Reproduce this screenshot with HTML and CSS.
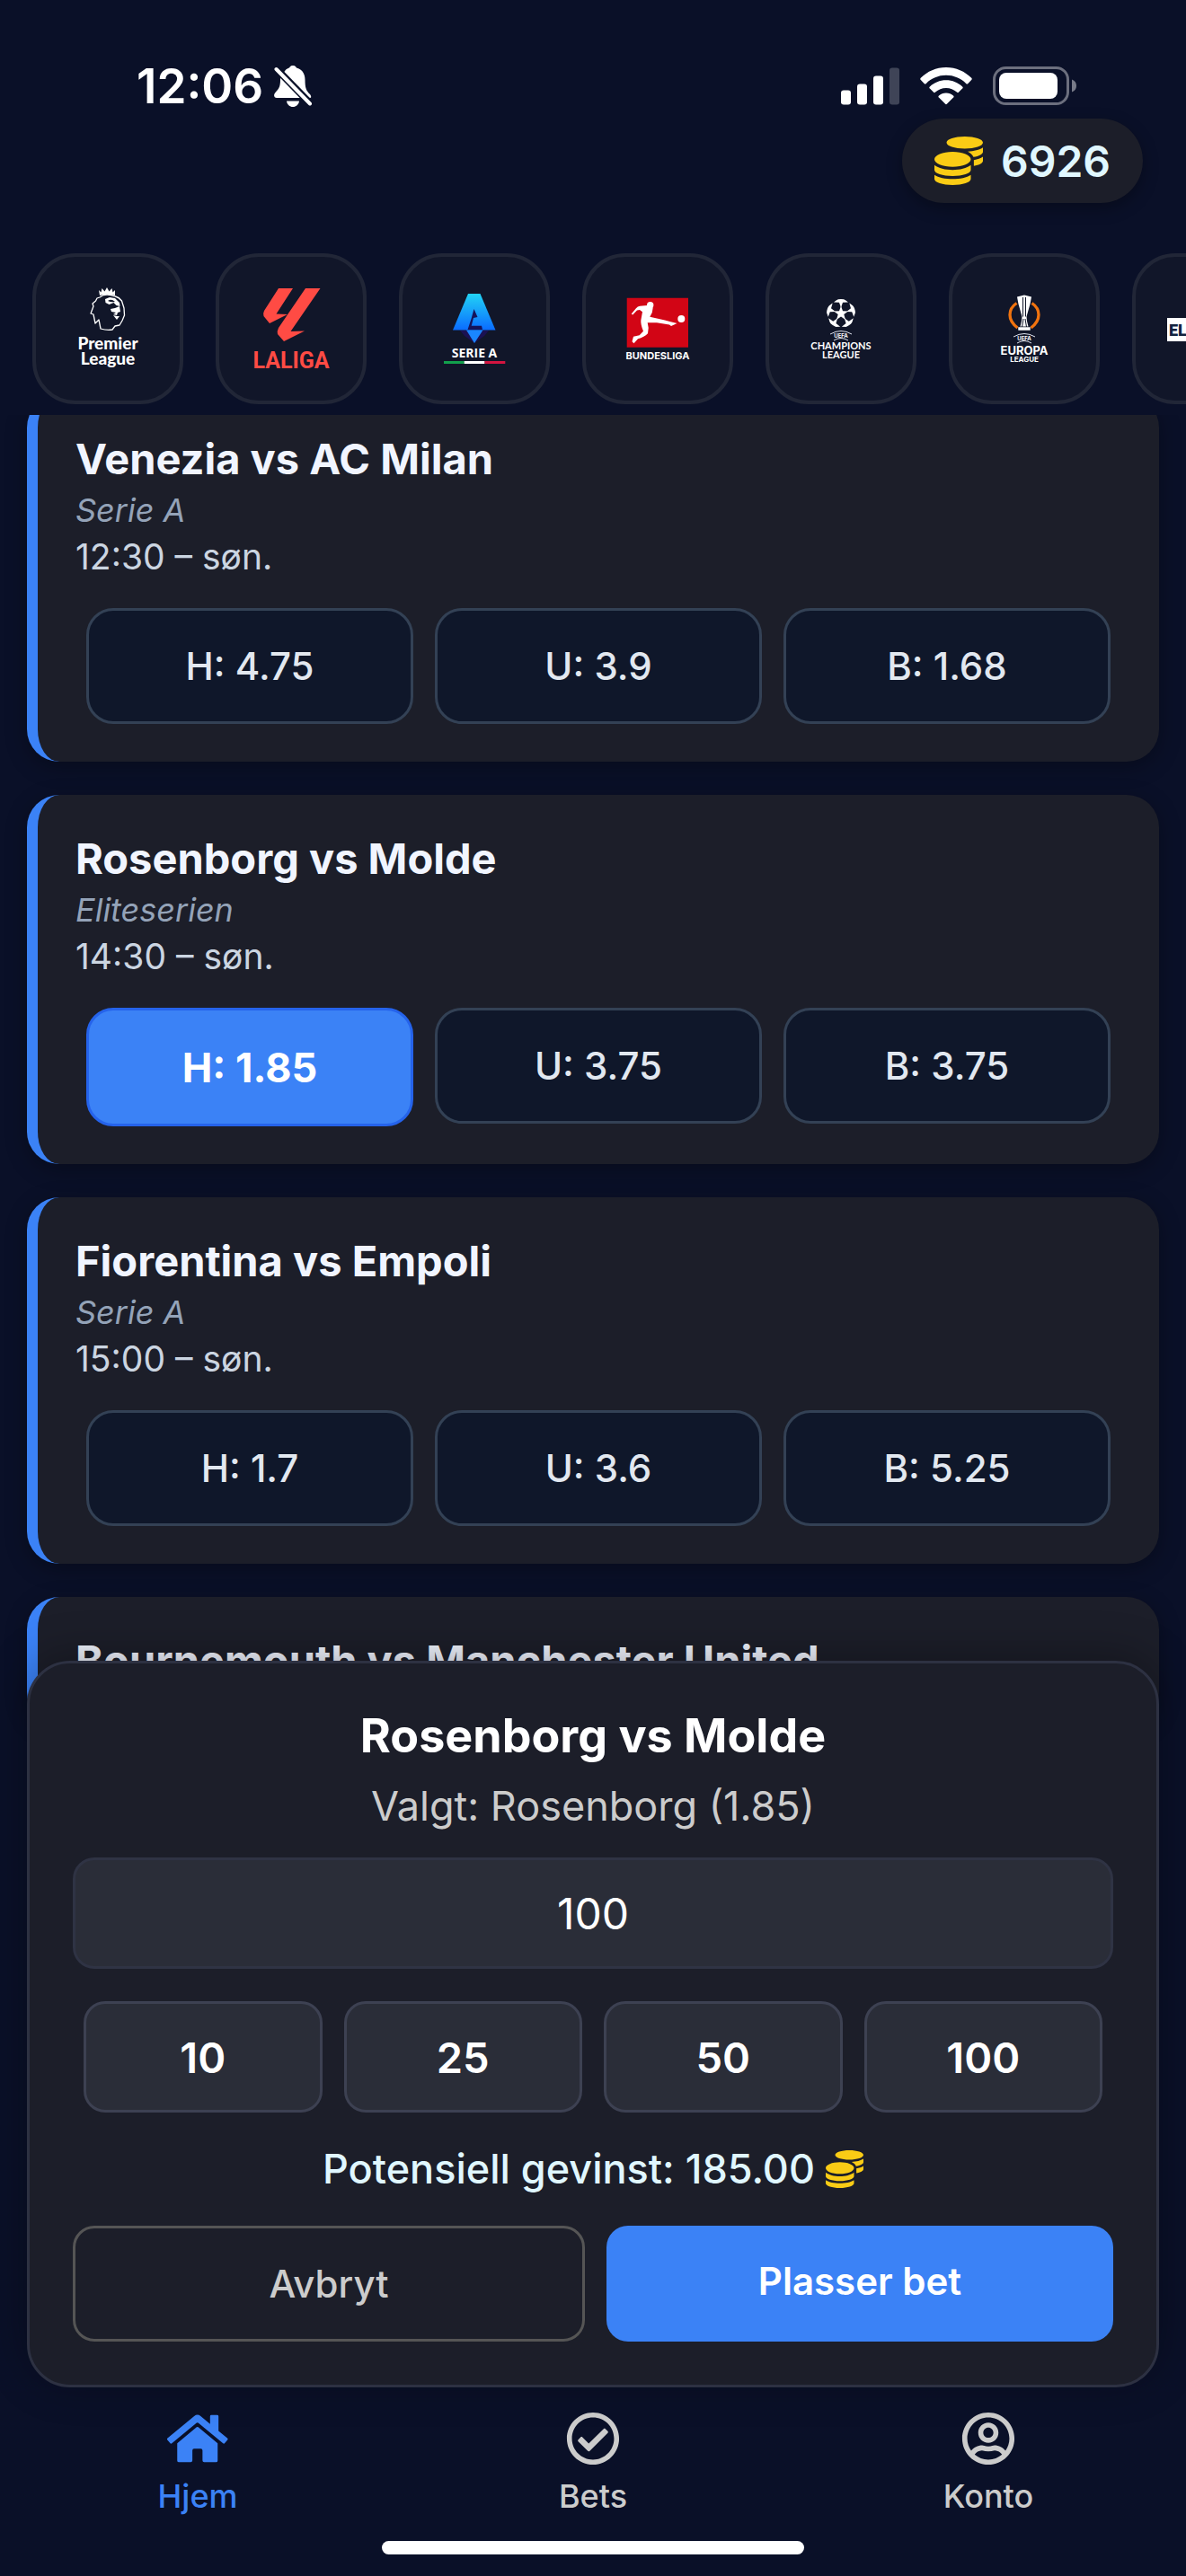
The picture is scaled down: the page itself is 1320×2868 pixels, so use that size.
FILE: index.html
```html
<!DOCTYPE html>
<html lang="no">

<head>
   <meta charset="UTF-8">
   <meta name="viewport" content="width=device-width, initial-scale=1.0">
   <title>Hjem</title>
   <link rel="stylesheet" href="styles.css">
</head>

<body>
   <!-- shared shapes -->
   <svg class="defs" aria-hidden="true">
      <symbol id="coins" viewBox="0 0 512 512">
         <path d="M0 405.3V448c0 35.3 86 64 192 64s192-28.7 192-64v-42.7C342.7 434.4 267.2 448 192 448S41.3 434.4 0 405.3zM320 128c106 0 192-28.7 192-64S426 0 320 0 128 28.7 128 64s86 64 192 64zM0 300.4V352c0 35.3 86 64 192 64s192-28.7 192-64v-51.6c-41.3 34-116.9 51.6-192 51.6S41.3 334.4 0 300.4zm416 11c57.3-11.1 96-31.7 96-55.4v-42.7c-23.2 16.4-57.3 27.6-96 34.5v63.6zM192 160C86 160 0 195.8 0 240s86 80 192 80 192-35.8 192-80-86-80-192-80zm219.3 56.3c60-10.8 100.7-32 100.7-56.3v-42.7c-35.5 25.1-96.5 38.6-160.7 41.8 29.5 14.3 51.2 33.5 60 57.2z" />
      </symbol>
   </svg>

   <div class="status-bar">
      <div class="status-left">
         <span class="clock">12:06</span>
         <svg width="42" height="46" viewBox="0 0 42 46" aria-hidden="true">
            <path fill="#fff" d="M12 6C14 3.500 16 3 17 2.600C18 .5 19.500 0 21 0s3 .5 4 2.600C31 4 34.500 9 34.500 16c0 9 1.500 12 5 15.500 1.500 1.500 2 3 1.500 4.200L39 36H3c-3 0-4-3-1.500-6C5 26 7 24 7 16c0-1 0-2 .3-3zM14 39.500h14c-.5 4-3.500 6.500-7 6.500s-6.500-2.500-7-6.500z" />
            <path stroke="#0a1028" stroke-width="8" d="M3 4l37 38" />
            <path stroke="#fff" stroke-width="4" stroke-linecap="round" d="M2.500 4l37.500 38.500" />
         </svg>
      </div>
      <div class="status-right">
         <svg width="65" height="42" viewBox="0 0 65 42" fill="#fff" aria-hidden="true">
            <rect x="0" y="25.500" width="11" height="16" rx="3" />
            <rect x="18" y="18.500" width="11" height="23" rx="3" />
            <rect x="36" y="9.500" width="11" height="32" rx="3" />
            <rect x="54" y="0.500" width="11" height="41" rx="3" opacity=".22" />
         </svg>
         <svg width="58" height="42" viewBox="0 0 58 42" aria-hidden="true">
            <path fill="#fff" d="M29 0C40 0 50 4.500 57.200 11.800c.7.800.7 1.500 0 2.200l-3.800 3.900c-.7.700-1.500.7-2.200 0C45.500 12.200 37.500 8.800 29 8.800S12.500 12.200 6.800 17.900c-.7.700-1.500.7-2.200 0L.8 14c-.7-.7-.7-1.400 0-2.200C8 4.500 18 0 29 0zM29 14.200c7 0 13.300 2.700 18.100 7.200.8.800.8 1.500 0 2.200l-4 4c-.7.700-1.400.7-2.200 0-3.200-2.900-7.300-4.600-11.900-4.600s-8.700 1.700-11.900 4.600c-.8.700-1.500.7-2.200 0l-4-4c-.8-.7-.8-1.400 0-2.200 4.800-4.500 11.100-7.200 18.100-7.200zM29 28.500c3.100 0 5.900 1.100 8 2.900.8.800.8 1.500.1 2.200l-7 7c-.8.800-1.400.8-2.200 0l-7-7c-.7-.7-.7-1.400.1-2.200 2.100-1.800 4.900-2.900 8-2.900z" />
         </svg>
         <svg width="93" height="44" viewBox="0 0 93 44" aria-hidden="true">
            <rect x="1.500" y="1.500" width="82" height="40" rx="13" fill="none" stroke="#fff" stroke-opacity=".4" stroke-width="3" />
            <rect x="7" y="7" width="65" height="29" rx="8" fill="#fff" />
            <path fill="#fff" fill-opacity=".45" d="M88 14.500c3.500 1.200 5 4 5 7s-1.500 5.800-5 7z" />
         </svg>
      </div>
   </div>

   <header class="header">
      <div class="balance">
         <svg class="coins" aria-hidden="true"><use href="#coins" /></svg>
         <span>6926</span>
      </div>
   </header>

   <div class="leagues">
      <button type="button" class="league" aria-label="Premier League">
         <svg viewBox="36 36 96 96" aria-hidden="true">
            <path fill="#fff" d="M74 41l2.500 2.500L77.500 39l3 3.500L83 38l2.500 4.500 3-3.500 1 4.500L92 41v6q-9-2.500-17 0z" />
            <path fill="none" stroke="#fff" stroke-width="1.300" stroke-linejoin="round" d="M92 48q-7-3-13-1.500l-4 2.500-3 1-1.500 3L67 56l1 3-3 8 3 1 2 10 4-4 2 10q7 2 13 1l3-4 5-1 3-5 2.500-6-.5-8-2.500-8q-3-4-7-5z" />
            <path fill="#fff" d="M81 51l5-2 6 1 5 5 .5 4-4-1-3-3-5 2-4-2zM87 62l5-1 5-2 1 6-3 1-1 3-4-1 3-2-5-1zM90 69l4 1 3 0-3 4z" />
            <path fill="#111629" d="M84 53q4-3 8 1-4 1-8-1z" />
            <text class="logo-round" x="84" y="107" fill="#fff">Premier</text>
            <text class="logo-round" x="84" y="124" fill="#fff">League</text>
         </svg>
      </button>
      <button type="button" class="league" aria-label="LaLiga">
         <svg viewBox="36 36 96 96" aria-hidden="true">
            <path fill="#ff4b44" d="M70 39h16L67.500 67.500 80 68 60 78l-6.500-8q-1-3 .5-6zM100 39h16.500L83.500 87l15.500-.5L76 98l-7-8q-1-3 1-7z" />
            <text class="logo-laliga" x="84" y="128" fill="#ff4b44">LALIGA</text>
         </svg>
      </button>
      <button type="button" class="league" aria-label="Serie A">
         <svg viewBox="36 36 96 96" aria-hidden="true">
            <defs>
               <linearGradient id="serieA" x1="0" y1="0" x2="0" y2="1">
                  <stop offset="0" stop-color="#22d3f5" />
                  <stop offset="1" stop-color="#0a6cff" />
               </linearGradient>
            </defs>
            <path fill="#1b1152" d="M68 86h32l-5 6-11 8-11-8z" />
            <path fill="url(#serieA)" d="M77 45h13.500l17 40.500H60z" />
            <path fill="#15135a" d="M83.500 62l4 9-4.500 1-2.300 8.700H92l1 4.300H76.500l4-12z" />
            <path fill="#1a86ff" d="M75 85.500h18.500L84 100z" />
            <text class="logo-serie" x="84" y="116" fill="#fff">SERIE A</text>
            <path stroke="#12a04c" stroke-width="3" d="M50 121.500h22.700" />
            <path stroke="#fff" stroke-width="3" d="M72.700 121.500h22.800" />
            <path stroke="#d31440" stroke-width="3" d="M95.500 121.500h22.800" />
         </svg>
      </button>
      <button type="button" class="league" aria-label="Bundesliga">
         <svg viewBox="36 36 96 96" aria-hidden="true">
            <path fill="#d20515" d="M49.700 49.700h68.300v55H49.700z" />
            <circle cx="75.700" cy="57.700" r="3.700" fill="#fff" />
            <path fill="#fff" d="M54.700 67.500l5-6q2-2.800 4.500-2.800l8.500-.7 6 2.500q0 5-3.400 10.200L92 74.500l5.500 1.500 8 2-6.500 3-2-1.500-14-2.200H72.700q2 6 .3 12-4 4-11 6l-4.500 5-2-2 1.500-5.500 6.700-1.500 4.300-4.500q-3-7-2.700-12l1.700-9.500-3-2.300-3 .5-4.800 5z" />
            <circle cx="110.300" cy="73" r="4" fill="#fff" />
            <text class="logo-bundes" x="84" y="118" fill="#fff">BUNDESLIGA</text>
         </svg>
      </button>
      <button type="button" class="league" aria-label="Champions League">
         <svg viewBox="36 36 96 96" aria-hidden="true">
            <defs>
               <path id="star" d="M0-8.500l2 5.700 6 .2-4.700 3.700L5 7 0 3.600-5 7l1.700-5.900L-8-2.600l6-.2z" />
               <clipPath id="ball">
                  <circle cx="0" cy="0" r="16" />
               </clipPath>
            </defs>
            <g transform="translate(84 67)" fill="#fff">
               <use href="#star" />
               <g clip-path="url(#ball)">
                  <use href="#star" transform="translate(0 -15) rotate(180)" />
                  <use href="#star" transform="rotate(72) translate(0 -15) rotate(180)" />
                  <use href="#star" transform="rotate(144) translate(0 -15) rotate(180)" />
                  <use href="#star" transform="rotate(216) translate(0 -15) rotate(180)" />
                  <use href="#star" transform="rotate(288) translate(0 -15) rotate(180)" />
               </g>
            </g>
            <path fill="none" stroke="#dfe3ee" stroke-width="1" d="M72 90q12-7 24 0M76 97q8-5 16 0" />
            <text class="logo-uefa" x="84" y="94" fill="#fff">UEFA</text>
            <text class="logo-ucl" x="84" y="107" fill="#fff">CHAMPIONS</text>
            <text class="logo-ucl" x="84" y="117" fill="#fff">LEAGUE</text>
         </svg>
      </button>
      <button type="button" class="league" aria-label="Europa League">
         <svg viewBox="36 36 96 96" aria-hidden="true">
            <path fill="none" stroke="#f0730f" stroke-width="3.300" d="M75.500 55.500q-7.500 5-7.500 13t8.500 14.500M92.500 55.500q7.500 5 7.500 13T91.500 83" />
            <path fill="#fff" d="M76 48.500l4-1 4-1 4 1 4 1-1.500 8-4 14 .5 5 1.500 6h-9l1.500-6 .5-5-4-14zM77.300 82.300h13.400v3.500H77.300z" />
            <path stroke="#111629" stroke-width="1" d="M82.500 49v21.500M85.500 49v21.500M83 73l-1.500 9M85 73l1.500 9" />
            <path fill="none" stroke="#dfe3ee" stroke-width="1" d="M72 93q12-7 24 0M76 100q8-5 16 0" />
            <text class="logo-uefa" x="84" y="97" fill="#fff">UEFA</text>
            <text class="logo-uel" x="84" y="113" fill="#fff">EUROPA</text>
            <text class="logo-uel-sub" x="84" y="121" fill="#fff">LEAGUE</text>
         </svg>
      </button>
      <button type="button" class="league" aria-label="Eliteserien">
         <svg viewBox="36 36 96 96" aria-hidden="true">
            <path fill="#fff" d="M39 72h90v26H39z" />
            <text class="logo-elite" x="41" y="92" fill="#12233f">ELITESERIEN</text>
         </svg>
      </button>
   </div>

   <main class="main">
      <div class="feed">
         <article class="match">
            <h2>Venezia vs AC Milan</h2>
            <p class="match-league">Serie A</p>
            <p class="match-time">12:30 – søn.</p>
            <div class="odds">
               <button type="button">H: 4.75</button>
               <button type="button">U: 3.9</button>
               <button type="button">B: 1.68</button>
            </div>
         </article>
         <article class="match">
            <h2>Rosenborg vs Molde</h2>
            <p class="match-league">Eliteserien</p>
            <p class="match-time">14:30 – søn.</p>
            <div class="odds">
               <button type="button" class="selected">H: 1.85</button>
               <button type="button">U: 3.75</button>
               <button type="button">B: 3.75</button>
            </div>
         </article>
         <article class="match">
            <h2>Fiorentina vs Empoli</h2>
            <p class="match-league">Serie A</p>
            <p class="match-time">15:00 – søn.</p>
            <div class="odds">
               <button type="button">H: 1.7</button>
               <button type="button">U: 3.6</button>
               <button type="button">B: 5.25</button>
            </div>
         </article>
         <article class="match">
            <h2>Bournemouth vs Manchester United</h2>
         </article>
      </div>

      <form class="slip">
         <h2>Rosenborg vs Molde</h2>
         <label for="stake">Valgt: Rosenborg (1.85)</label>
         <input type="text" id="stake" name="stake" inputmode="numeric" value="100">
         <div class="amounts">
            <button type="button">10</button>
            <button type="button">25</button>
            <button type="button">50</button>
            <button type="button">100</button>
         </div>
         <p class="payout">
            <span>Potensiell gevinst: 185.00</span>
            <svg class="coins coins-small" aria-hidden="true"><use href="#coins" /></svg>
         </p>
         <div class="actions">
            <button type="button" class="cancel">Avbryt</button>
            <button type="submit" class="place">Plasser bet</button>
         </div>
      </form>
   </main>

   <nav class="tabs">
      <a href="#hjem" class="active">
         <svg viewBox="0 0 576 512" aria-hidden="true">
            <path d="M280.37 148.26L96 300.11V464a16 16 0 0 0 16 16l112.06-.29a16 16 0 0 0 15.92-16V368a16 16 0 0 1 16-16h64a16 16 0 0 1 16 16v95.64a16 16 0 0 0 16 16.050L464 480a16 16 0 0 0 16-16V300L295.67 148.26a12.190 12.190 0 0 0-15.300 0zM571.600 251.470L488 182.560V44.050a12 12 0 0 0-12-12h-56a12 12 0 0 0-12 12v72.610L318.470 43a48 48 0 0 0-61 0L4.340 251.470a12 12 0 0 0-1.600 16.900l25.500 31A12 12 0 0 0 45.150 301l235.220-193.740a12.190 12.190 0 0 1 15.300 0L530.900 301a12 12 0 0 0 16.900-1.600l25.500-31a12 12 0 0 0-1.700-16.930z" />
         </svg>
         Hjem
      </a>
      <a href="#bets">
         <svg viewBox="0 0 512 512" aria-hidden="true">
            <path d="M256 8C119.033 8 8 119.033 8 256s111.033 248 248 248 248-111.033 248-248S392.967 8 256 8zm0 48c110.532 0 200 89.451 200 200 0 110.532-89.451 200-200 200-110.532 0-200-89.451-200-200 0-110.532 89.451-200 200-200m140.204 130.267l-22.536-22.718c-4.667-4.705-12.265-4.736-16.970-.068L215.346 303.697l-59.792-60.277c-4.667-4.705-12.265-4.736-16.970-.069l-22.719 22.536c-4.705 4.667-4.736 12.265-.068 16.971l90.781 91.516c4.667 4.705 12.265 4.736 16.970.068l172.589-171.204c4.704-4.668 4.734-12.266.067-16.971z" />
         </svg>
         Bets
      </a>
      <a href="#konto">
         <svg viewBox="-8 0 512 512" aria-hidden="true">
            <path d="M248 104c-53 0-96 43-96 96s43 96 96 96 96-43 96-96-43-96-96-96zm0 144c-26.500 0-48-21.500-48-48s21.500-48 48-48 48 21.500 48 48-21.500 48-48 48zm0-240C111 8 0 119 0 256s111 248 248 248 248-111 248-248S385 8 248 8zm0 448c-49.700 0-95.100-18.300-130.100-48.400 14.900-23 40.400-38.600 69.600-39.500 20.800 6.400 40.600 9.600 60.500 9.600s39.700-3.100 60.500-9.600c29.200 1 54.700 16.500 69.600 39.500-35 30.100-80.400 48.400-130.100 48.400zm162.700-84.100c-24.400-31.400-62.100-51.900-105.100-51.900-10.200 0-26 9.600-57.600 9.600-31.500 0-47.400-9.600-57.600-9.600-42.900 0-80.600 20.500-105.100 51.900C61.900 339.200 48 299.200 48 256c0-110.300 89.700-200 200-200s200 89.700 200 200c0 43.200-13.900 83.200-37.300 115.900z" />
         </svg>
         Konto
      </a>
   </nav>
   <div class="home-indicator"></div>
</body>

</html>
```
FILE: styles.css
```css
* {
   box-sizing: border-box;
}

body {
   margin: 0;
   height: 100vh;
   display: flex;
   flex-direction: column;
   overflow: hidden;
   background-color: #0a1028;
   color: #fff;
   font-family: 'Inter', sans-serif;
}

h2,
p {
   margin: 0;
}

button,
input {
   font-family: inherit;
   color: inherit;
   margin: 0;
   padding: 0;
}

svg {
   display: block;
   flex-shrink: 0;
}

.defs {
   display: none;
}

/* status bar */
.status-bar {
   display: flex;
   justify-content: space-between;
   align-items: center;
   padding: 60px 122px 0 152px;
}

.status-left,
.status-right {
   display: flex;
   align-items: center;
   gap: 12px;
   height: 72px;
}

.status-right {
   gap: 23px;
}

.clock {
   font-size: 53px;
   font-weight: 600;
}

/* coin balance */
.header {
   display: flex;
   justify-content: flex-end;
   padding: 0 48px;
}

.balance {
   display: flex;
   align-items: center;
   gap: 20px;
   height: 94px;
   padding: 0 36px;
   border-radius: 48px;
   background-color: #1c1e29;
   box-shadow: 0 6px 18px rgba(0, 0, 0, 0.3);
   color: #e0f7ff;
   font-size: 48px;
   font-weight: 600;
}

.coins {
   width: 54px;
   height: 54px;
   fill: #facc15;
}

.coins-small {
   width: 42px;
   height: 42px;
}

/* league filter */
.leagues {
   display: flex;
   gap: 36px;
   padding: 56px 0 12px 36px;
   overflow: hidden;
}

.league {
   flex: 0 0 168px;
   height: 168px;
   display: flex;
   align-items: center;
   justify-content: center;
   border: 4px solid #212637;
   border-radius: 48px;
   background-color: #111629;
}

.league svg {
   width: 96px;
   height: 96px;
}

.league text {
   text-anchor: middle;
   font-weight: 700;
}

.league .logo-round {
   font-family: 'Lato', sans-serif;
   font-size: 19px;
   font-weight: 900;
}

.league .logo-laliga {
   font-family: 'Roboto', sans-serif;
   font-size: 25px;
}

.league .logo-serie {
   font-family: 'Open Sans', sans-serif;
   font-size: 14px;
}

.league .logo-bundes {
   font-size: 11px;
}

.league .logo-uefa {
   font-size: 6px;
}

.league .logo-ucl {
   font-family: 'Lato', sans-serif;
   font-size: 11px;
}

.league .logo-uel {
   font-size: 13px;
}

.league .logo-uel-sub {
   font-size: 8px;
}

.league .logo-elite {
   font-family: 'Roboto', sans-serif;
   font-size: 18px;
   font-weight: 900;
   text-anchor: start;
}

/* match list */
.main {
   position: relative;
   flex: 1;
   min-height: 0;
}

.feed {
   height: 100%;
   padding: 0 30px;
   overflow: hidden;
}

.match {
   margin-bottom: 37px;
   padding: 42px;
   border-left: 12px solid #3b82f6;
   border-radius: 36px;
   background-color: #1c1e29;
   box-shadow: 0 6px 24px rgba(0, 0, 0, 0.3);
}

/* the list is scrolled a little under the league filter */
.match:first-child {
   margin-top: -22px;
}

.match h2 {
   color: #f1f5ff;
   font-size: 47px;
   font-weight: 700;
   line-height: 58px;
}

.match-league {
   color: #94a3b8;
   font-size: 36px;
   font-style: italic;
   line-height: 56px;
}

.match-time {
   color: #cbd5e1;
   font-size: 39px;
   line-height: 48px;
}

.odds {
   display: flex;
   gap: 24px;
   padding: 33px 12px 0;
}

.odds button {
   flex: 1;
   height: 129px;
   border: 3px solid #334155;
   border-radius: 30px;
   background-color: #0f172a;
   color: #e2e8f0;
   font-size: 42px;
   font-weight: 500;
}

.odds .selected {
   height: 132px;
   border-color: #2563eb;
   background-color: #3b82f6;
   color: #fff;
   font-size: 45px;
   font-weight: 700;
}

/* bet slip, lies over the list */
.slip {
   position: absolute;
   left: 30px;
   right: 30px;
   bottom: 0;
   display: flex;
   flex-direction: column;
   padding: 48px;
   border: 3px solid #2d3142;
   border-radius: 48px;
   background-color: #1c1e29;
   box-shadow: 0 -6px 48px rgba(0, 0, 0, 0.3);
   text-align: center;
}

.slip h2 {
   font-size: 52px;
   font-weight: 700;
   line-height: 66px;
}

.slip label {
   margin-top: 18px;
   color: #ccc;
   font-size: 45px;
   line-height: 54px;
}

.slip input {
   height: 124px;
   margin-top: 30px;
   border: 3px solid #2f3344;
   border-radius: 24px;
   background-color: #2a2d38;
   font-size: 48px;
   text-align: center;
}

.amounts {
   display: flex;
   gap: 24px;
   padding: 36px 12px 0;
}

.amounts button {
   flex: 1;
   height: 124px;
   border: 3px solid #3d4152;
   border-radius: 24px;
   background-color: #2a2d38;
   font-size: 47px;
   font-weight: 600;
}

.payout {
   display: flex;
   justify-content: center;
   align-items: center;
   gap: 12px;
   margin: 36px 0;
   color: #e0f7ff;
   font-size: 45px;
   font-weight: 500;
   line-height: 54px;
}

.actions {
   display: flex;
   gap: 24px;
}

.actions button {
   flex: 1;
   height: 129px;
   border: 0;
   border-radius: 24px;
   background: none;
   font-size: 42px;
   font-weight: 600;
}

.actions .cancel {
   border: 3px solid #555;
   color: #ccc;
   font-weight: 500;
}

.actions .place {
   padding-bottom: 6px;
   background-color: #3b82f6;
}

/* bottom tabs */
.tabs {
   display: flex;
   padding: 27px 0 28px;
}

.tabs a {
   flex: 1;
   display: flex;
   flex-direction: column;
   align-items: center;
   gap: 12px;
   color: #ccc;
   font-size: 36px;
   font-weight: 500;
   line-height: 44px;
   text-decoration: none;
}

.tabs svg {
   height: 60px;
   fill: currentColor;
}

.tabs .active {
   color: #3b82f6;
}

.home-indicator {
   align-self: center;
   width: 470px;
   height: 15px;
   margin-bottom: 24px;
   border-radius: 8px;
   background-color: #fff;
}
```
